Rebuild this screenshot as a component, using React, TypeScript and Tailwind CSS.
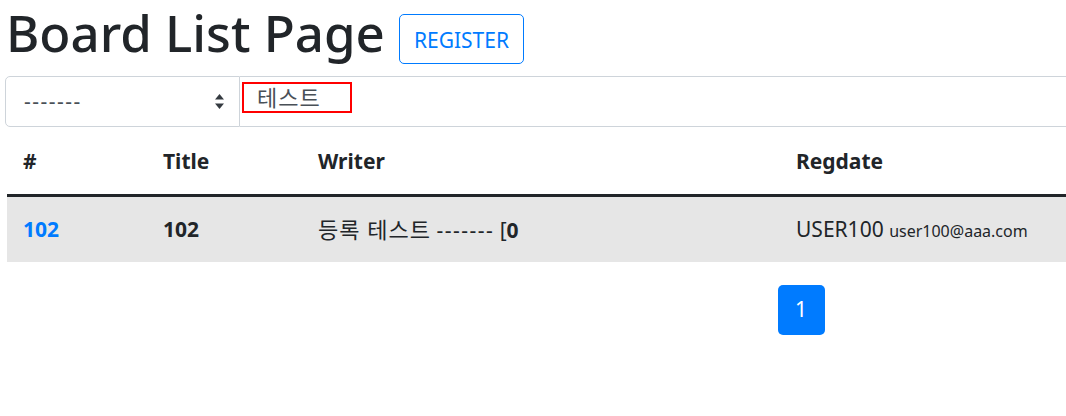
import React from "react";

const font = { fontFamily: "'Noto Sans', 'Noto Sans CJK KR', sans-serif" };

function SelectArrows() {
  return (
    <svg width="9" height="15" viewBox="0 0 9 15" className="shrink-0">
      <path d="M4.5 0 L9 5.5 H0 Z" fill="#343a40" />
      <path d="M4.5 15 L9 9.5 H0 Z" fill="#343a40" />
    </svg>
  );
}

export default function App() {
  return (
    <div className="w-[1066px] h-[416px] overflow-hidden bg-white text-[#212529]" style={font}>
      <div className="w-[1596px] pl-[6px]">
        {/* Title + register button */}
        <div className="flex items-start h-[76px]">
          <h1 className="shrink-0 whitespace-nowrap text-[51px] leading-[70px] -mt-[3px] font-medium">Board List Page</h1>
          <button className="ml-[14px] mt-[14px] h-[50px] px-[14px] pt-[2px] border border-[#007bff] rounded-[5px] text-[#007bff] text-[21px] leading-none">
            REGISTER
          </button>
        </div>

        {/* Search bar */}
        <div className="flex h-[51px] -ml-[1px]">
          <div className="w-[235px] flex items-center justify-between pl-[18px] pr-[15px] border border-[#ced4da] rounded-l-[5px] text-[#495057] text-[21px]">
            <span className="tracking-[1.5px]">-------</span>
            <SelectArrows />
          </div>
          <div className="flex-1 flex items-start pt-[5px] border border-l-0 border-[#ced4da] pl-[2px]">
            <span className="inline-flex items-center h-[31px] w-[110px] border-2 border-[#ff0000] pl-[13px] text-[#495057] text-[22px] tracking-[1px]">
              테스트
            </span>
          </div>
        </div>

        {/* Table */}
        <table className="w-full mt-[3px] ml-[1px] border-collapse text-[21px]">
          <thead>
            <tr className="h-[65px] border-b-[3px] border-[#212529]">
              <th className="w-[140px] px-[16px] text-left font-bold">#</th>
              <th className="w-[155px] px-[16px] text-left font-bold">Title</th>
              <th className="w-[478px] px-[16px] text-left font-bold">Writer</th>
              <th className="px-[16px] text-left font-bold">Regdate</th>
            </tr>
          </thead>
          <tbody>
            <tr className="h-[67px] bg-[#e6e6e6]">
              <td className="px-[16px] font-bold text-[#007bff]">102</td>
              <td className="px-[16px] font-bold">102</td>
              <td className="px-[16px]">
                <span className="text-[22px] tracking-[1px]">등록 테스트</span>{" "}
                <span className="tracking-[1.5px]">-------</span> [<b>0</b>
              </td>
              <td className="px-[16px]">
                USER100 <small className="text-[16px]">user100@aaa.com</small>
              </td>
            </tr>
          </tbody>
        </table>

        {/* Pagination */}
        <div className="flex justify-center mt-[23px]">
          <span className="w-[47px] h-[50px] flex items-center justify-center rounded-[5px] bg-[#007bff] text-white text-[21px]">
            1
          </span>
        </div>
      </div>
    </div>
  );
}
